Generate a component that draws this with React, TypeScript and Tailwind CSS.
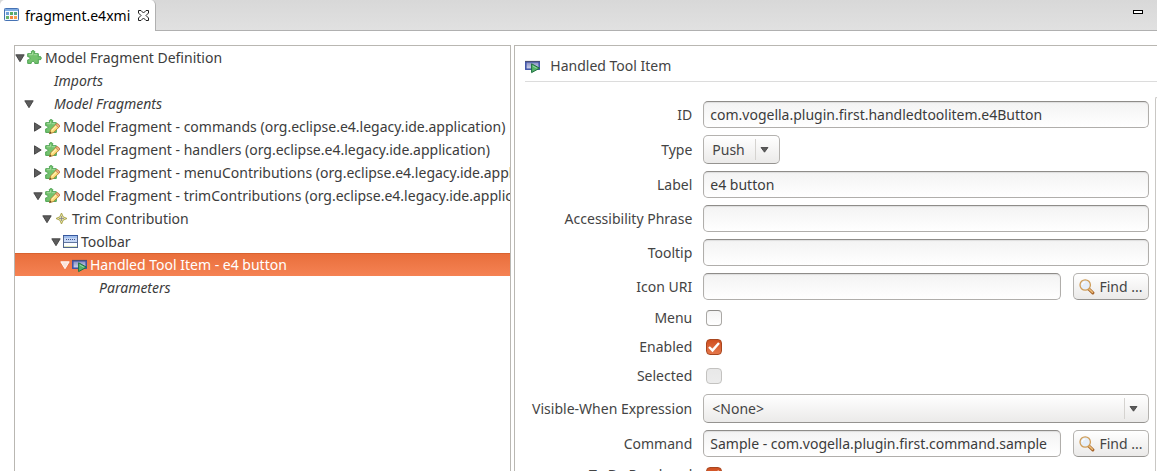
import React, { useState } from "react";

function FileIcon() {
  return (
    <svg className="size-4 shrink-0" viewBox="0 0 16 16" aria-hidden="true">
      <rect x="0.5" y="0.5" width="14" height="12" rx="0.8" fill="#f4f9ff" stroke="#4572b4" />
      <rect x="1" y="1" width="13" height="2" fill="#7fabe2" />
      <rect x="2" y="4" width="3" height="3" fill="#6f9fd6" />
      <rect x="6" y="4" width="3" height="3" fill="#59ad62" />
      <rect x="10" y="4" width="3" height="3" fill="#5ba886" />
      <rect x="2" y="8" width="3" height="3" fill="#66b36a" />
      <rect x="6" y="8" width="3" height="3" fill="#f0863f" />
      <rect x="10" y="8" width="3" height="3" fill="#f5a04a" />
    </svg>
  );
}

function PuzzleIcon() {
  return (
    <svg className="size-4 shrink-0" viewBox="0 0 16 16" aria-hidden="true">
      <path
        d="M0.7 3.7H4.6C4.9 3 4.2 2.6 4.3 1.7C4.5 0.3 7.6 0.3 7.8 1.7C7.9 2.6 7.2 3 7.5 3.7H11.3V6.8C12 7 12.4 6.3 13.1 6.4C14.6 6.7 14.6 9.6 13.1 9.8C12.4 9.9 12 9.2 11.3 9.4V13.4H7.8C7.4 12.8 7.9 12 7 11.6C6 11.3 5 11.3 4.5 12C4.2 12.6 4.5 13 4.2 13.4H0.7V9.9C1.4 9.5 2.3 10 2.7 9.2C3 8.2 2.9 7.4 2.2 7C1.6 6.8 1.1 7 0.7 6.7Z"
        fill="#74c26e"
        stroke="#4da352"
      />
      <path d="M1.7 4.7H5.5V2.4M6.7 4.7H10.3" fill="none" stroke="#a5dc9e" />
    </svg>
  );
}

function PuzzlePencilIcon() {
  return (
    <svg className="size-4 shrink-0" viewBox="0 0 16 16" aria-hidden="true">
      <path
        d="M0.7 3.7H4.6C4.9 3 4.2 2.6 4.3 1.7C4.5 0.3 7.6 0.3 7.8 1.7C7.9 2.6 7.2 3 7.5 3.7H11.3V13.4H0.7V9.9C1.4 9.5 2.3 10 2.7 9.2C3 8.2 2.9 7.4 2.2 7C1.6 6.8 1.1 7 0.7 6.7Z"
        fill="#74c26e"
        stroke="#4da352"
      />
      <path d="M1.7 4.7H5.5V2.4M6.7 4.7H10.3" fill="none" stroke="#a5dc9e" />
      <path d="M4.6 14.7L5.6 11L11.4 4.9C12.5 4 15.3 6.4 14.5 7.7L8.3 13.6Z" fill="#fbdc78" stroke="#b87a2c" strokeWidth="0.8" />
      <path d="M6.7 11.4L12.1 6" stroke="#fff3b8" strokeWidth="1.2" />
      <path d="M11.4 4.9C12.5 4 15.3 6.4 14.5 7.7L13.5 8.6L10.5 5.8Z" fill="#efac84" stroke="#b66d3b" strokeWidth="0.6" />
      <path d="M4.2 15L5.1 12.5L6.7 14Z" fill="#6b4a2c" />
    </svg>
  );
}

function TrimIcon() {
  return (
    <svg className="size-4 shrink-0" viewBox="0 0 16 16" aria-hidden="true">
      <path d="M7.5 2L9.2 5.8L13 7.5L9.2 9.2L7.5 13L5.8 9.2L2 7.5L5.8 5.8Z" fill="#e4e0a8" stroke="#a6a044" strokeWidth="0.9" />
      <path d="M7.5 5V10M5 7.5H10" stroke="#85858d" strokeWidth="0.8" />
    </svg>
  );
}

function ToolbarIcon() {
  return (
    <svg className="size-4 shrink-0" viewBox="0 0 16 16" aria-hidden="true">
      <rect x="0.5" y="1.5" width="14" height="12" fill="#fcfdff" stroke="#50658f" />
      <path d="M0 1.5H15" stroke="#3658a0" />
      <rect x="1" y="2" width="13" height="2" fill="#9fbdec" />
      <rect x="1" y="4" width="13" height="4" fill="#c6d7f5" />
      <path d="M3 5.5H12" stroke="#3c5590" strokeDasharray="1 1" />
      <path d="M1 8.5H14" stroke="#60779f" />
      <path d="M1 12.5H14" stroke="#d9e4ba" />
    </svg>
  );
}

function ToolItemIcon() {
  return (
    <svg className="size-4 shrink-0" viewBox="0 0 16 16" aria-hidden="true">
      <defs>
        <linearGradient id="toolItem" x1="0" x2="0" y1="0" y2="1">
          <stop offset="0" stopColor="#8489bd" />
          <stop offset="1" stopColor="#d4daf0" />
        </linearGradient>
      </defs>
      <rect x="0.8" y="3.8" width="13.4" height="7.4" fill="url(#toolItem)" stroke="#3b50a6" strokeWidth="1.5" />
      <path d="M0 3.4H15" stroke="#4c4e68" strokeWidth="0.9" />
      <path d="M6.6 5.8L14.6 10.2L6.6 14.6Z" fill="#55b46b" stroke="#1d7040" />
      <path d="M7.8 8L11.8 10.2" stroke="#a4deb0" strokeWidth="0.8" />
    </svg>
  );
}

function SearchIcon() {
  return (
    <svg className="size-4 shrink-0" viewBox="0 0 16 16" aria-hidden="true">
      <path d="M10.2 10.4L13.8 13.8" stroke="#a7652c" strokeWidth="3.2" strokeLinecap="round" />
      <path d="M10.4 10.4L13.4 13.2" stroke="#efc07a" strokeWidth="1.5" strokeLinecap="round" />
      <circle cx="6.2" cy="6" r="5.2" fill="#e6effa" stroke="#cf9d58" strokeWidth="1.3" />
      <path d="M3.2 6A3 3 0 0 1 6.2 3" fill="none" stroke="#ffffff" strokeWidth="1.2" />
    </svg>
  );
}

function Arrow({ open, light }: { open: boolean; light?: boolean }) {
  const fill = light ? "#fbe3d8" : "#5c5c5c";
  const stroke = light ? "#ffffff" : "#3f3f3f";
  return (
    <svg className="size-[10px]" viewBox="0 0 10 10" aria-hidden="true">
      <path d={open ? "M0.8 1.8H9.2L5 8.7Z" : "M1.5 0.8V9.2L8.2 5Z"} fill={fill} stroke={stroke} strokeWidth="0.9" />
    </svg>
  );
}

type Node = {
  level: number;
  text: string;
  icon?: () => React.ReactElement;
  state?: "open" | "closed";
  italic?: boolean;
};

const APP = "(org.eclipse.e4.legacy.ide.application)";

const NODES: Node[] = [
  { level: 0, text: "Model Fragment Definition", icon: PuzzleIcon, state: "open" },
  { level: 1, text: "Imports", italic: true },
  { level: 1, text: "Model Fragments", italic: true, state: "open" },
  { level: 2, text: `Model Fragment - commands ${APP}`, icon: PuzzlePencilIcon, state: "closed" },
  { level: 2, text: `Model Fragment - handlers ${APP}`, icon: PuzzlePencilIcon, state: "closed" },
  { level: 2, text: `Model Fragment - menuContributions ${APP}`, icon: PuzzlePencilIcon, state: "closed" },
  { level: 2, text: `Model Fragment - trimContributions ${APP}`, icon: PuzzlePencilIcon, state: "open" },
  { level: 3, text: "Trim Contribution", icon: TrimIcon, state: "open" },
  { level: 4, text: "Toolbar", icon: ToolbarIcon, state: "open" },
  { level: 5, text: "Handled Tool Item - e4 button", icon: ToolItemIcon, state: "open" },
  { level: 6, text: "Parameters", italic: true },
];

function Tree() {
  const [selected, setSelected] = useState(9);
  return (
    <ul role="tree" aria-label="Model" className="min-w-0 flex-[501] overflow-hidden border border-b-0 border-[#b9b7b2]">
      {NODES.map((node, i) => {
        const active = i === selected;
        const Icon = node.icon;
        return (
          <li
            key={node.text}
            role="treeitem"
            aria-level={node.level + 1}
            aria-selected={active}
            aria-expanded={node.state ? node.state === "open" : undefined}
            onClick={() => setSelected(i)}
            style={{ paddingLeft: node.level * 9 }}
            className={`flex h-[23px] items-center gap-0.5 whitespace-nowrap ${
              active ? "border-t border-[#d9622f] bg-linear-to-b from-[#e96f3c] to-[#f58253] text-white" : ""
            }`}
          >
            <span className="w-[10px] shrink-0">
              {node.state && <Arrow open={node.state === "open"} light={active} />}
            </span>
            <span className="size-4 shrink-0">{Icon && <Icon />}</span>
            <span className={node.italic ? "italic" : ""}>{node.text}</span>
          </li>
        );
      })}
    </ul>
  );
}

const FIELD =
  "h-[27px] w-full min-w-0 rounded-[5px] border border-[#b0aeab] border-t-[#8e8c89] bg-linear-to-b from-[#f3f3f3] to-white px-1.5 text-[#3c3c3c] shadow-[inset_0_1px_1px_#dedede] outline-none";
const BUTTON =
  "rounded-[5px] border border-[#b4b2af] border-b-[#959390] bg-linear-to-b from-white to-[#ebeae9]";

function Label({ id, children }: { id: string; children: string }) {
  return (
    <label htmlFor={id} className="text-right whitespace-nowrap">
      {children}
    </label>
  );
}

function TextRow({ id, label, value = "", find }: { id: string; label: string; value?: string; find?: boolean }) {
  return (
    <>
      <Label id={id}>{label}</Label>
      <div className="flex gap-3">
        <input id={id} type="text" defaultValue={value} className={FIELD} />
        {find && (
          <button type="button" className={`flex h-[27px] w-[76px] shrink-0 items-center justify-center gap-1 ${BUTTON}`}>
            <SearchIcon />
            <span>Find ...</span>
          </button>
        )}
      </div>
    </>
  );
}

function SelectRow({ id, label, options, narrow }: { id: string; label: string; options: string[]; narrow?: boolean }) {
  return (
    <>
      <Label id={id}>{label}</Label>
      <div className={`relative ${narrow ? "w-[77px]" : "w-full"}`}>
        <select id={id} className={`block h-[29px] w-full appearance-none pr-7 pl-2 outline-none ${BUTTON}`}>
          {options.map((o) => (
            <option key={o}>{o}</option>
          ))}
        </select>
        <span className="pointer-events-none absolute inset-y-1 right-[11px] flex items-center border-l border-[#d5d3d0] pl-1">
          <svg className="size-[9px]" viewBox="0 0 9 9" aria-hidden="true">
            <path d="M1 2.5H8L4.5 7.2Z" fill="#5c5c5c" stroke="#3f3f3f" strokeWidth="0.8" />
          </svg>
        </span>
      </div>
    </>
  );
}

function CheckRow({ id, label, checked, disabled }: { id: string; label: string; checked?: boolean; disabled?: boolean }) {
  return (
    <>
      <Label id={id}>{label}</Label>
      <div className="flex h-[22px] items-center pl-[3px]">
        <span className="relative size-4">
          <input
            id={id}
            type="checkbox"
            defaultChecked={checked}
            disabled={disabled}
            className="peer block size-4 appearance-none rounded-[4px] border border-[#aaa8a5] border-t-[#8e8c89] bg-linear-to-b from-[#f4f4f4] to-white checked:border-[#a8461f] checked:from-[#cf4f20] checked:to-[#e5774a] disabled:border-[#c3c2c0] disabled:from-[#e8e8e8] disabled:to-[#ececec]"
          />
          <svg className="pointer-events-none absolute inset-0 hidden size-4 peer-checked:block" viewBox="0 0 16 16" aria-hidden="true">
            <path d="M3 8L6.5 11.4L13 4" fill="none" stroke="#ffffff" strokeWidth="2.4" />
          </svg>
        </span>
      </div>
    </>
  );
}

export default function App() {
  return (
    <div className="flex h-screen flex-col overflow-hidden bg-white font-['Noto_Sans',sans-serif] text-[14px] leading-5 text-[#3c3c3c]">
      <header className="flex h-[31px] shrink-0 bg-linear-to-b from-[#d8d8d8] to-[#e1e1e1]">
        <div className="flex items-center gap-2 rounded-t-[5px] border-r border-[#b0b0b0] bg-white px-1.5 pl-1 text-black">
          <div className="flex items-center gap-[5px]">
            <FileIcon />
            <span>fragment.e4xmi</span>
          </div>
          <button type="button" aria-label="Close">
            <svg className="size-[11px]" viewBox="0 0 11 11" aria-hidden="true">
              <path d="M0.5 0.5H3L5.5 3L8 0.5H10.5V3L8 5.5L10.5 8V10.5H8L5.5 8L3 10.5H0.5V8L3 5.5L0.5 3Z" fill="#ffffff" stroke="#222222" />
            </svg>
          </button>
        </div>
        <div className="flex flex-1 justify-end border-b border-[#b0b0b0] pt-[10px] pr-[14px]">
          <button type="button" aria-label="Minimize" className="h-1 w-[10px] border border-black bg-white" />
        </div>
      </header>

      <main className="flex min-h-0 flex-1 gap-[3px] pt-[14px] pl-[14px]">
        <Tree />
        <section className="flex min-w-0 flex-[639] flex-col border-t border-l border-[#b9b7b2] pl-[10px] text-[#444444]">
          <h1 className="flex h-9 shrink-0 items-center gap-[9px] border-b border-[#dcdcdc] pt-1">
            <ToolItemIcon />
            <span>Handled Tool Item</span>
          </h1>
          <div className="mt-[15px] flex min-h-0 flex-1">
            <form className="grid min-w-0 flex-1 grid-cols-[167px_minmax(0,1fr)] content-start items-center gap-x-[11px] gap-y-[7px] pt-1 pr-1.5">
              <TextRow id="item-id" label="ID" value="com.vogella.plugin.first.handledtoolitem.e4Button" />
              <SelectRow id="item-type" label="Type" options={["Push", "Check", "Radio"]} narrow />
              <TextRow id="item-label" label="Label" value="e4 button" />
              <TextRow id="item-phrase" label="Accessibility Phrase" />
              <TextRow id="item-tooltip" label="Tooltip" />
              <TextRow id="item-icon" label="Icon URI" find />
              <CheckRow id="item-menu" label="Menu" />
              <CheckRow id="item-enabled" label="Enabled" checked />
              <CheckRow id="item-selected" label="Selected" disabled />
              <SelectRow id="item-visible" label="Visible-When Expression" options={["<None>"]} />
              <TextRow id="item-command" label="Command" value="Sample - com.vogella.plugin.first.command.sample" find />
              <CheckRow id="item-rendered" label="To Be Rendered" checked />
            </form>
            <div className="w-0.5 rounded-tl-[3px] border-t border-l border-[#c9c7c4]" />
          </div>
        </section>
      </main>
    </div>
  );
}
